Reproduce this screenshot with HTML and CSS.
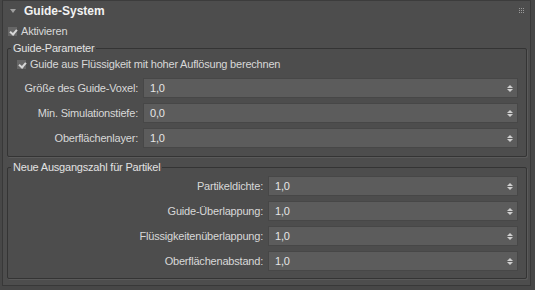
FILE: index.html
```html
<!DOCTYPE html>
<html lang="de">
<head>
    <meta charset="UTF-8" />
    <title>Guide-System</title>
    <link rel="stylesheet" href="styles.css">
</head>
<body>
    <div class="rollout">
        <div class="rollout-head">
            <span class="arrow"></span>
            <span class="title">Guide-System</span>
            <span class="grip">
                <i></i><i></i><i></i><i></i><i></i><i></i><i></i><i></i><i></i>
            </span>
        </div>

        <label class="check top-check">
            <span class="box"></span>
            <span>Aktivieren</span>
        </label>

        <fieldset class="group group-guide">
            <legend>Guide-Parameter</legend>
            <label class="check">
                <span class="box"></span>
                <span>Guide aus Flüssigkeit mit hoher Auflösung berechnen</span>
            </label>
            <div class="rows">
                <div class="lbl">Größe des Guide-Voxel:</div>
                <div class="spin"><span>1,0</span><span class="arrows"></span></div>
                <div class="lbl">Min. Simulationstiefe:</div>
                <div class="spin"><span>0,0</span><span class="arrows"></span></div>
                <div class="lbl">Oberflächenlayer:</div>
                <div class="spin"><span>1,0</span><span class="arrows"></span></div>
            </div>
        </fieldset>

        <fieldset class="group group-seed">
            <legend>Neue Ausgangszahl für Partikel</legend>
            <div class="rows">
                <div class="lbl">Partikeldichte:</div>
                <div class="spin"><span>1,0</span><span class="arrows"></span></div>
                <div class="lbl">Guide-Überlappung:</div>
                <div class="spin"><span>1,0</span><span class="arrows"></span></div>
                <div class="lbl">Flüssigkeitenüberlappung:</div>
                <div class="spin"><span>1,0</span><span class="arrows"></span></div>
                <div class="lbl">Oberflächenabstand:</div>
                <div class="spin"><span>1,0</span><span class="arrows"></span></div>
            </div>
        </fieldset>
    </div>
</body>
</html>
```

FILE: styles.css
```css
* {
    box-sizing: border-box;
    margin: 0;
    padding: 0;
}

body {
    background-color: #474747;
    font-family: 'Liberation Sans', Arial, sans-serif;
    font-size: 11px;
    letter-spacing: -0.2px;
    color: #d8d8d8;
}

.rollout {
    width: 529px;
    height: 286px;
    margin-left: 2px;
    background-color: #4d4d4d;
    border: 1px solid #383838;
    border-top-color: #3c3c3c;
}

.rollout-head {
    display: flex;
    align-items: center;
    height: 21px;
    padding-left: 7px;
}

.arrow {
    width: 0;
    height: 0;
    border-left: 3px solid transparent;
    border-right: 3px solid transparent;
    border-top: 4px solid #a0a0a0;
    margin-right: 8px;
    margin-top: -2px;
}

.title {
    font-size: 12px;
    font-weight: bold;
    letter-spacing: 0;
    color: #f2f2f2;
    margin-top: -1px;
}

.grip {
    margin-left: auto;
    margin-right: 6px;
    margin-top: -3px;
    display: grid;
    grid-template-columns: repeat(3, 1px);
    gap: 1px;
}

.grip i {
    width: 1px;
    height: 1px;
    background-color: #9a9a9a;
}

.check {
    display: flex;
    align-items: center;
    height: 14px;
}

.top-check {
    padding-left: 5px;
    margin-top: 2px;
}

.box {
    position: relative;
    width: 9px;
    height: 9px;
    margin-right: 4px;
    background-color: #666666;
}

.box::after {
    content: "";
    position: absolute;
    left: 3px;
    top: 1px;
    width: 3px;
    height: 5px;
    border-right: 2px solid #d8d8d8;
    border-bottom: 2px solid #d8d8d8;
    transform: rotate(40deg);
}

.group {
    margin: 0 3px 0 4px;
    border: 1px solid #343434;
    border-radius: 2px;
    box-shadow: 1px 1px 0 #5a5a5a;
    padding: 0 8px 7px 0;
}

.group-guide {
    margin-top: 3px;
    padding-bottom: 8px;
}

.group-seed {
    margin-top: 3px;
    padding-top: 2px;
}

.group legend {
    margin-left: 3px;
    padding: 0 2px;
    line-height: 14px;
    color: #e2e2e2;
}

.group .check {
    padding-left: 9px;
    margin-top: 2px;
    margin-bottom: 7px;
}

.rows {
    display: grid;
    grid-template-columns: 130px 1fr;
    column-gap: 5px;
    row-gap: 5px;
    align-items: center;
}

.group-seed .rows {
    grid-template-columns: 255px 1fr;
}

.lbl {
    text-align: right;
    white-space: nowrap;
}

.spin {
    display: flex;
    align-items: center;
    justify-content: space-between;
    height: 20px;
    padding: 0 4px 0 6px;
    background-color: #5c5c5c;
    border: 1px solid #474747;
    color: #e6e6e6;
}

.arrows {
    display: flex;
    flex-direction: column;
    gap: 1px;
}

.arrows::before,
.arrows::after {
    content: "";
    width: 0;
    height: 0;
    border-left: 3px solid transparent;
    border-right: 3px solid transparent;
}

.arrows::before {
    border-bottom: 3px solid #cfcfcf;
}

.arrows::after {
    border-top: 3px solid #cfcfcf;
}
```
